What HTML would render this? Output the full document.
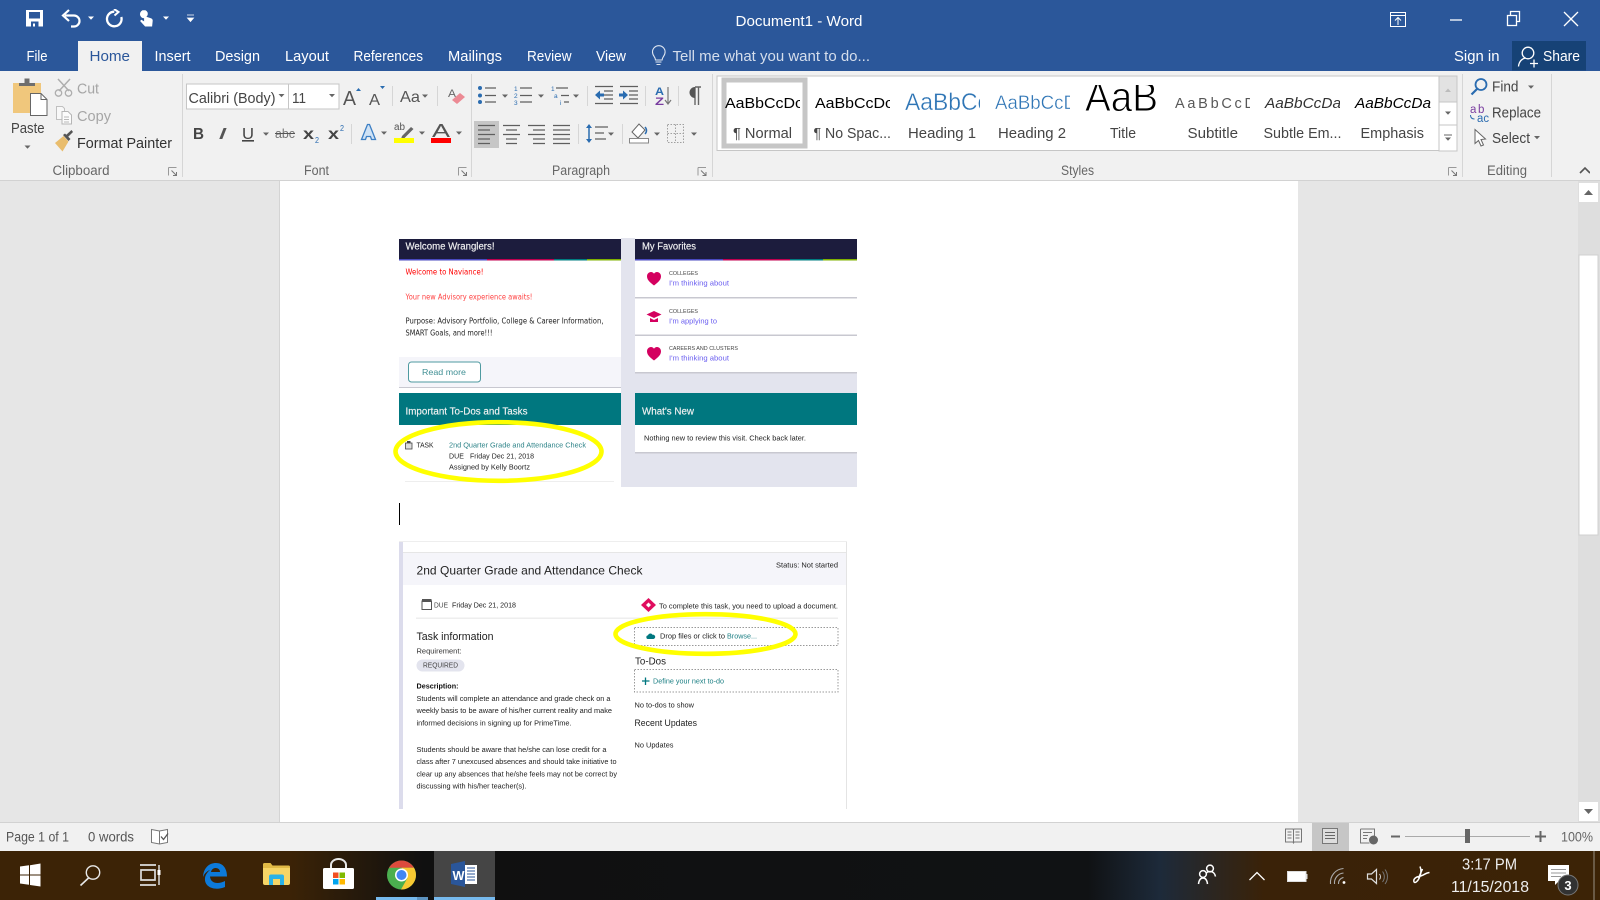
<!DOCTYPE html>
<html><head><meta charset="utf-8"><title>Document1 - Word</title>
<style>
html,body{margin:0;padding:0;width:1600px;height:900px;overflow:hidden;background:#e6e6e6}
svg{display:block;position:absolute;left:0;top:0}
text{font-family:"Liberation Sans",sans-serif;white-space:pre}
.w{fill:#fff;font-size:15px}
.r{fill:#444;font-size:14.5px}
.g{fill:#666;font-size:13.5px}
.d{fill:#222;font-size:7px}
.ln{stroke:#5f5f5f;stroke-width:1.2;fill:none}
.sep{stroke:#d6d6d6;stroke-width:1}
.thin{stroke:#fff;stroke-width:.35}
.hd{font-size:10px;fill:#f2f2f2;stroke:#f2f2f2;stroke-width:.15}
</style></head><body>
<svg width="1600" height="900" viewBox="0 0 1600 900" xmlns="http://www.w3.org/2000/svg">
<defs>
<path id="car" d="M-3-1.5h6l-3 3.2z" fill="#666"/>
<path id="wcar" d="M-3-1.5h6l-3 3.2z" fill="#fff"/>
<g id="lnch"><path d="M0 0h8M0 0v8" stroke="#999" fill="none"/><path d="M3 3l5 5M8 4.5v3.5h-3.5" stroke="#777" fill="none"/></g>
<path id="heart" d="M7 13.5C2 9.5 0 7.5 0 4.2 0 1.8 1.8 0 4 0c1.3 0 2.4.7 3 1.7C7.600.7 8.700 0 10 0c2.200 0 4 1.800 4 4.200 0 3.300-2 5.300-7 9.300z" fill="#d4005f"/>
<filter id="b1" x="0" y="0" width="100%" height="100%"><feGaussianBlur stdDeviation="0.3"/></filter>
<filter id="b2" x="0" y="0" width="100%" height="100%"><feGaussianBlur stdDeviation="0.25"/></filter>
<clipPath id="c1"><rect x="724" y="85" width="76" height="35"/></clipPath>
<clipPath id="c2"><rect x="814" y="85" width="76" height="35"/></clipPath>
<clipPath id="c3"><rect x="904" y="85" width="76" height="35"/></clipPath>
<clipPath id="c4"><rect x="994" y="85" width="76" height="35"/></clipPath>
<clipPath id="c5"><rect x="1084" y="85" width="76" height="35"/></clipPath>
<clipPath id="c6"><rect x="1174" y="85" width="76" height="35"/></clipPath>
<clipPath id="c7"><rect x="1264" y="85" width="76" height="35"/></clipPath>
<clipPath id="c8"><rect x="1354" y="85" width="77" height="35"/></clipPath>
<linearGradient id="tb" x1="0" x2="1" y1="0" y2="0">
<stop offset="0" stop-color="#3c2306"/><stop offset=".18" stop-color="#3c2306"/><stop offset=".265" stop-color="#101010"/><stop offset=".68" stop-color="#101214"/><stop offset=".725" stop-color="#1d2a3a"/><stop offset=".79" stop-color="#3a2208"/><stop offset="1" stop-color="#3c2306"/>
</linearGradient>
</defs>

<!-- backgrounds -->
<rect x="0" y="0" width="1600" height="71" fill="#2b579a"/>
<rect x="0" y="71" width="1600" height="109" fill="#f1f1f1"/>
<rect x="0" y="180" width="1600" height="1" fill="#d2d2d2"/>
<rect x="0" y="181" width="1600" height="641" fill="#e6e6e6"/>
<rect x="280" y="181" width="1018" height="641" fill="#fff"/>
<rect x="279" y="181" width="1" height="641" fill="#d4d4d4"/>
<rect x="1578" y="181" width="22" height="641" fill="#dedede"/>
<rect x="1579" y="255" width="19" height="280" fill="#fff" stroke="#d0d0d0"/>
<rect x="1579" y="183" width="19" height="19" fill="#fff"/>
<path d="M1584 195h9l-4.500-5z" fill="#666"/>
<rect x="1579" y="802" width="19" height="19" fill="#fff"/>
<path d="M1584 809h9l-4.500 5z" fill="#666"/>
<rect x="0" y="822" width="1600" height="1" fill="#d2d2d2"/>
<rect x="0" y="823" width="1600" height="28" fill="#f1f1f1"/>
<rect x="0" y="851" width="1600" height="49" fill="url(#tb)"/>

<g filter="url(#b2)">
<!-- Quick access toolbar -->
<path fill="#fff" fill-rule="evenodd" d="M26 10h17v16.500H26z M29 12v6.500h11V12z M31 21.500v5h2v-3h2v3h3.500v-5z"/>
<path d="M65 15.500h9a5.500 5.500 0 0 1 0 11h-3" stroke="#fff" stroke-width="2.200" fill="none"/>
<path d="M69 10l-6 5.500 6 5.500" stroke="#fff" stroke-width="2.200" fill="none"/>
<use href="#wcar" x="91" y="18"/>
<path d="M121.300 17a7.300 7.300 0 1 1-7-5.300" stroke="#fff" stroke-width="2.300" fill="none"/>
<path d="M114 9l4.500 3-4 3.500" stroke="#fff" stroke-width="2" fill="none"/>
<path fill="#fff" d="M144 10a3.800 3.800 0 0 1 3.800 3.800c0 1.300-.6 2.400-1.500 3l4.600 1.500c1.200.4 1.900 1.300 1.800 2.500l-.6 5.700h-7l-5-5.500 1.300-1.300 2.700 1.700v-3.100a3.800 3.800 0 0 1 0-8.300z"/>
<use href="#wcar" x="166" y="18"/>
<path d="M187 15h7M187.500 18h6l-3 3.500z" stroke="#fff" fill="#fff" stroke-width=".8"/>

<!-- title -->
<text class="w" x="735.500" y="26" textLength="127" lengthAdjust="spacingAndGlyphs">Document1 - Word</text>
<rect x="1390.500" y="12.500" width="15" height="14" stroke="#fff" fill="none"/><path d="M1390 15.500h16" stroke="#fff"/><path d="M1398 25v-7M1395 20.500l3-3 3 3" stroke="#fff" fill="none"/>
<path d="M1450 20h12" stroke="#fff" stroke-width="1.300"/>
<path d="M1507.500 15.500h9v10h-9zM1510.500 15v-3.500h9v10h-3" stroke="#fff" stroke-width="1.300" fill="none"/>
<path d="M1564 12l14 14M1578 12l-14 14" stroke="#fff" stroke-width="1.300"/>

<!-- tabs -->
<rect x="78" y="41" width="64" height="31" fill="#f1f1f1"/>
<text class="w" x="26.500" y="61" textLength="21" lengthAdjust="spacingAndGlyphs">File</text>
<text class="w" style="fill:#2b579a" x="89.500" y="61" textLength="40.500" lengthAdjust="spacingAndGlyphs">Home</text>
<text class="w" x="154.500" y="61" textLength="36" lengthAdjust="spacingAndGlyphs">Insert</text>
<text class="w" x="215" y="61" textLength="45" lengthAdjust="spacingAndGlyphs">Design</text>
<text class="w" x="285" y="61" textLength="44" lengthAdjust="spacingAndGlyphs">Layout</text>
<text class="w" x="353.500" y="61" textLength="69.500" lengthAdjust="spacingAndGlyphs">References</text>
<text class="w" x="448" y="61" textLength="54" lengthAdjust="spacingAndGlyphs">Mailings</text>
<text class="w" x="527" y="61" textLength="44.500" lengthAdjust="spacingAndGlyphs">Review</text>
<text class="w" x="596" y="61" textLength="30" lengthAdjust="spacingAndGlyphs">View</text>
<path d="M655.500 60c0-3-3-4-3-8a6.300 6.300 0 0 1 12.600 0c0 4-3 5-3 8zM655.500 62h6M656.500 64.500h4" stroke="#dfe7f2" stroke-width="1.100" fill="none"/>
<text class="w" style="fill:#d5deec" x="672.500" y="61" textLength="197.500" lengthAdjust="spacingAndGlyphs">Tell me what you want to do...</text>
<text class="w" x="1454" y="61" textLength="45.500" lengthAdjust="spacingAndGlyphs">Sign in</text>
<rect x="1512" y="41" width="74" height="29.500" fill="#184376"/>
<circle cx="1528" cy="53" r="5.800" stroke="#fff" stroke-width="1.300" fill="none"/>
<path d="M1518.500 66.500c.5-5.500 4-8 7-8.500M1530 63.500h8M1534 59.500v8" stroke="#fff" stroke-width="1.300" fill="none"/>
<text class="w" x="1543" y="61" textLength="37" lengthAdjust="spacingAndGlyphs">Share</text>

<!-- Clipboard -->
<rect x="13" y="83" width="28" height="30" fill="#f0c77c"/>
<path d="M19 86v-3h5.500v-4.500h5V83H35v3z" fill="#6e6e6e"/>
<path d="M30.500 93.500h10.500l6 6v16h-16.500z" fill="#fff" stroke="#666"/>
<path d="M41 93.500v6h6" stroke="#666" fill="none"/>
<text class="r" x="11" y="133" textLength="33.500" lengthAdjust="spacingAndGlyphs">Paste</text>
<use href="#car" x="27.500" y="147"/>
<path d="M58 79l11 12M70 79l-11 12" stroke="#aeaeae" stroke-width="1.500"/><circle cx="58.500" cy="93" r="3.200" stroke="#aeaeae" fill="none" stroke-width="1.300"/><circle cx="68.500" cy="93" r="3.200" stroke="#aeaeae" fill="none" stroke-width="1.300"/>
<text class="r" style="fill:#a6a6a6" x="77" y="93.500" textLength="22" lengthAdjust="spacingAndGlyphs">Cut</text>
<path d="M56.500 106.500h6l2 2v11h-8z" fill="#f8f8f8" stroke="#c0c0c0"/><path d="M62 111.500h6l3.500 3.500v9H62z" fill="#fbfbfb" stroke="#b6b6b6"/><path d="M64 117h5M64 119.500h5M64 122h5" stroke="#b8b8b8"/>
<text class="r" style="fill:#a6a6a6" x="77" y="121" textLength="34" lengthAdjust="spacingAndGlyphs">Copy</text>
<path d="M55 143l8.500-7 5 5.500-6 10z" fill="#e9bd6d"/><path d="M63 135l2-1.500 5.500 5.500-2 2z" fill="#555"/><path d="M66 135l5.500-5 1.500 2-5 5z" fill="#555"/>
<text class="r" style="fill:#333" x="77" y="148" textLength="95" lengthAdjust="spacingAndGlyphs">Format Painter</text>
<text class="g" x="52.500" y="175" textLength="57" lengthAdjust="spacingAndGlyphs">Clipboard</text>
<use href="#lnch" x="168.500" y="167.500"/>
<path class="sep" d="M182.500 74v103"/>

<!-- Font -->
<rect x="186.500" y="84" width="102" height="25" fill="#fff" stroke="#c6c6c6"/>
<rect x="288.500" y="84" width="50.500" height="25" fill="#fff" stroke="#c6c6c6"/>
<text class="r" x="188.500" y="103" textLength="87" lengthAdjust="spacingAndGlyphs">Calibri (Body)</text>
<text class="r" x="292" y="103" textLength="14" lengthAdjust="spacingAndGlyphs">11</text>
<use href="#car" x="281.500" y="95.500"/><use href="#car" x="332" y="95.500"/>
<text x="343" y="105" style="font-size:20px;fill:#555" textLength="13" lengthAdjust="spacingAndGlyphs">A</text>
<path d="M356 91h5l-2.500-3z" fill="#2b6cb0"/>
<text x="369" y="105" style="font-size:16px;fill:#555" textLength="11" lengthAdjust="spacingAndGlyphs">A</text>
<path d="M380 86h5l-2.500 3z" fill="#2b6cb0"/>
<path class="sep" d="M392.500 86v20"/>
<text x="400" y="102" style="font-size:16px;fill:#555" textLength="20" lengthAdjust="spacingAndGlyphs">Aa</text>
<use href="#car" x="425" y="96"/>
<path class="sep" d="M437.500 86v20"/>
<text x="448" y="97" style="font-size:11px;fill:#666" textLength="8" lengthAdjust="spacingAndGlyphs">A</text>
<path d="M452 100l8-7 5 4-8 7z" fill="#ec8a94"/>
<text x="193" y="139" style="font-size:16px;font-weight:bold;fill:#444" textLength="11" lengthAdjust="spacingAndGlyphs">B</text>
<text x="218" y="139" style="font-size:16px;font-style:italic;fill:#555" textLength="9" lengthAdjust="spacingAndGlyphs">I</text>
<text x="242" y="139" style="font-size:16px;fill:#444;text-decoration:underline" textLength="12" lengthAdjust="spacingAndGlyphs">U</text>
<use href="#car" x="266" y="134"/>
<text x="275" y="138" style="font-size:13px;fill:#777" textLength="20" lengthAdjust="spacingAndGlyphs">abc</text>
<path d="M275 133.500h20" stroke="#555"/>
<text x="303" y="139" style="font-size:16px;fill:#444;font-weight:bold" textLength="11" lengthAdjust="spacingAndGlyphs">x</text>
<text x="315" y="143" style="font-size:8px;fill:#2b6cb0" textLength="4" lengthAdjust="spacingAndGlyphs">2</text>
<text x="328" y="139" style="font-size:16px;fill:#444;font-weight:bold" textLength="11" lengthAdjust="spacingAndGlyphs">x</text>
<text x="340" y="131" style="font-size:8px;fill:#2b6cb0" textLength="4" lengthAdjust="spacingAndGlyphs">2</text>
<path class="sep" d="M351.500 124v20"/>
<path d="M361.500 139.500l6-15h2l6 15h-4l-1-3h-4l-1 3z" fill="#cfe2f5" stroke="#3c7fc4" stroke-width="1.300"/>
<use href="#car" x="384" y="133"/>
<text x="394" y="130" style="font-size:10px;fill:#555" textLength="11" lengthAdjust="spacingAndGlyphs">ab</text>
<path d="M402 136l9-9 2.500 2-9 9-3.500 1z" fill="#666"/>
<rect x="394" y="138" width="20" height="5" fill="#ffff00"/>
<use href="#car" x="422" y="133"/>
<text x="432" y="137" style="font-size:18px;fill:#555" textLength="18" lengthAdjust="spacingAndGlyphs">A</text>
<rect x="431" y="138" width="20" height="5" fill="#f00"/>
<use href="#car" x="459" y="133"/>
<text class="g" x="304" y="175" textLength="25" lengthAdjust="spacingAndGlyphs">Font</text>
<use href="#lnch" x="458.500" y="167.500"/>
<path class="sep" d="M471.500 74v103"/>

<!-- Paragraph -->
<g fill="#2b6cb0"><circle cx="480" cy="88" r="2"/><circle cx="480" cy="95.500" r="2"/><circle cx="480" cy="102" r="2"/></g>
<path class="ln" d="M485 88h11M485 95.500h11M485 102h11"/>
<use href="#car" x="505" y="96"/>
<text x="514" y="91" style="font-size:6.500px;fill:#2b6cb0">1</text><text x="514" y="98" style="font-size:6.500px;fill:#2b6cb0">2</text><text x="514" y="105" style="font-size:6.500px;fill:#2b6cb0">3</text>
<path class="ln" d="M520 88h12M520 95.500h12M520 102h12"/>
<use href="#car" x="541" y="96"/>
<text x="551" y="91" style="font-size:6.500px;fill:#2b6cb0">1</text><text x="554" y="98" style="font-size:6.500px;fill:#2b6cb0">a</text><text x="560" y="105" style="font-size:6.500px;fill:#2b6cb0">i</text>
<path class="ln" d="M556 88h12M561 95.500h8M564 102h5"/>
<use href="#car" x="576" y="96"/>
<path class="sep" d="M587.500 86v20"/>
<path class="ln" d="M595 86.500h18M604 91h9M604 95h9M604 99h9M595 103.500h18"/>
<path d="M595 95l5-4.500v3h4v3h-4v3z" fill="#2b6cb0"/>
<path class="ln" d="M620 86.500h18M629 91h9M629 95h9M629 99h9M620 103.500h18"/>
<path d="M628 95l-5-4.500v3h-4v3h4v3z" fill="#2b6cb0"/>
<path class="sep" d="M645.500 86v20"/>
<text x="655" y="95" style="font-size:11px;font-weight:bold;fill:#2b6cb0" textLength="9" lengthAdjust="spacingAndGlyphs">A</text>
<text x="655" y="105" style="font-size:11px;font-weight:bold;fill:#7a3ea0" textLength="9" lengthAdjust="spacingAndGlyphs">Z</text>
<path d="M668 87v16M665 100l3 4 3-4" stroke="#777" fill="none" stroke-width="1.200"/>
<path class="sep" d="M678.500 86v20"/>
<path d="M695 87h6M695 87v18M698.500 87v18" stroke="#666" stroke-width="1.400" fill="none"/>
<path d="M695 87a5.500 5.500 0 0 0 0 11z" fill="#555"/>
<rect x="474" y="121" width="25" height="27" fill="#c6c6c6"/>
<path class="ln" d="M478 125.500h17M478 130h12M478 134.500h17M478 139h12M478 143.500h12"/>
<path class="ln" d="M503 125.500h17M506 130h11M503 134.500h17M506 139h11M506 143.500h11"/>
<path class="ln" d="M528 125.500h17M533 130h12M528 134.500h17M533 139h12M533 143.500h12"/>
<path class="ln" d="M553 125.500h17M553 130h17M553 134.500h17M553 139h17M553 143.500h17"/>
<path class="sep" d="M578.500 124v20"/>
<path d="M589 125v16" stroke="#2b6cb0" stroke-width="1.500"/><path d="M586 128l3-4 3 4zM586 139l3 4 3-4z" fill="#2b6cb0"/>
<path class="ln" d="M595 127h13M595 133h9M595 139h11"/>
<use href="#car" x="611" y="134"/>
<path class="sep" d="M622.500 124v20"/>
<path d="M632 132l7-8 6 6-7 8z" fill="#fff" stroke="#666"/><path d="M645 127c2 2 2 5 0 7" stroke="#2b6cb0" stroke-width="1.500" fill="none"/>
<rect x="629.500" y="138.500" width="19" height="4.500" fill="#fff" stroke="#888"/>
<use href="#car" x="657" y="134"/>
<path d="M667.500 124.500h16v18h-16zM675.500 124.500v18M667.500 133.500h16" stroke="#a0a0a0" stroke-dasharray="1.500 1.500" fill="none"/>
<use href="#car" x="694" y="134"/>
<text class="g" x="552" y="175" textLength="58" lengthAdjust="spacingAndGlyphs">Paragraph</text>
<use href="#lnch" x="698" y="167.500"/>
<path class="sep" d="M712.500 74v103"/>

<!-- Styles gallery -->
<rect x="717" y="76" width="722" height="74.500" fill="#fff" stroke="#c6c6c6"/>
<rect x="1439" y="76" width="18" height="26" fill="#e2e2e2" stroke="#c6c6c6"/>
<rect x="1439" y="102" width="18" height="23" fill="#fff" stroke="#c6c6c6"/>
<rect x="1439" y="125" width="18" height="26" fill="#fff" stroke="#c6c6c6"/>
<path d="M1445 92h6l-3-3.500z" fill="#bcbcbc"/><use href="#car" x="1448" y="113"/>
<path d="M1444 135h8" stroke="#666"/><use href="#car" x="1448" y="139"/>
<rect x="724" y="80" width="81" height="66" fill="#fff" stroke="#c6c6c6" stroke-width="5"/>
<text clip-path="url(#c1)" x="725" y="108" style="font-size:14.500px;fill:#000" textLength="78" lengthAdjust="spacingAndGlyphs">AaBbCcDc</text>
<text clip-path="url(#c2)" x="815" y="108" style="font-size:14.500px;fill:#000" textLength="78" lengthAdjust="spacingAndGlyphs">AaBbCcDc</text>
<text class="thin" clip-path="url(#c3)" x="905" y="110" style="font-size:24px;fill:#2e74b5" textLength="84" lengthAdjust="spacingAndGlyphs">AaBbCc</text>
<text class="thin" clip-path="url(#c4)" x="995" y="109" style="font-size:19.500px;fill:#2e74b5" textLength="82" lengthAdjust="spacingAndGlyphs">AaBbCcD</text>
<text clip-path="url(#c5)" x="1085" y="111" style="font-size:42px;fill:#000;stroke:#fff;stroke-width:.9" textLength="73" lengthAdjust="spacingAndGlyphs">AaB</text>
<text clip-path="url(#c6)" x="1175" y="108" style="font-size:14.500px;fill:#595959" textLength="80" lengthAdjust="spacing">AaBbCcD</text>
<text clip-path="url(#c7)" x="1265" y="108" style="font-size:14.500px;fill:#333;font-style:italic" textLength="76" lengthAdjust="spacingAndGlyphs">AaBbCcDa</text>
<text clip-path="url(#c8)" x="1355" y="108" style="font-size:14.500px;fill:#000;font-style:italic" textLength="76" lengthAdjust="spacingAndGlyphs">AaBbCcDa</text>
<text class="r" x="733" y="138" textLength="59" lengthAdjust="spacingAndGlyphs">¶ Normal</text>
<text class="r" x="813.500" y="138" textLength="77.500" lengthAdjust="spacingAndGlyphs">¶ No Spac...</text>
<text class="r" x="908" y="138" textLength="68" lengthAdjust="spacingAndGlyphs">Heading 1</text>
<text class="r" x="998" y="138" textLength="68" lengthAdjust="spacingAndGlyphs">Heading 2</text>
<text class="r" x="1110" y="138" textLength="26" lengthAdjust="spacingAndGlyphs">Title</text>
<text class="r" x="1187.500" y="138" textLength="50.500" lengthAdjust="spacingAndGlyphs">Subtitle</text>
<text class="r" x="1263.500" y="138" textLength="78" lengthAdjust="spacingAndGlyphs">Subtle Em...</text>
<text class="r" x="1360.500" y="138" textLength="63.500" lengthAdjust="spacingAndGlyphs">Emphasis</text>
<text class="g" x="1061" y="175" textLength="33" lengthAdjust="spacingAndGlyphs">Styles</text>
<use href="#lnch" x="1448.500" y="167.500"/>
<path class="sep" d="M1462.500 74v103"/>

<!-- Editing -->
<circle cx="1481" cy="84.500" r="5.500" stroke="#2b6cb0" stroke-width="1.800" fill="none"/><path d="M1477 89l-5.500 5.500" stroke="#2b6cb0" stroke-width="2.200"/>
<text class="r" x="1492" y="91.500" textLength="26.500" lengthAdjust="spacingAndGlyphs">Find</text>
<use href="#car" x="1531" y="87"/>
<text x="1470" y="113" style="font-size:11.500px;fill:#7a3ea0">a</text><text x="1478" y="113" style="font-size:11.500px;fill:#7a3ea0">b</text>
<text x="1477" y="122" style="font-size:11.500px;fill:#2b6cb0" textLength="12" lengthAdjust="spacingAndGlyphs">ac</text>
<path d="M1470.500 115c0 3 2 4 4 4" stroke="#2b6cb0" fill="none"/>
<text class="r" x="1492" y="117.500" textLength="49" lengthAdjust="spacingAndGlyphs">Replace</text>
<path d="M1475 129.500v14l3.500-3 2.500 5.500 2.500-1-2.500-5.500 4.500-.5z" fill="#fff" stroke="#666"/>
<text class="r" x="1492" y="143" textLength="38" lengthAdjust="spacingAndGlyphs">Select</text>
<use href="#car" x="1537" y="137.500"/>
<text class="g" x="1487" y="175" textLength="40" lengthAdjust="spacingAndGlyphs">Editing</text>
<path class="sep" d="M1551.500 74v103"/>
<path d="M1580 173l5-5 5 5" stroke="#555" stroke-width="1.600" fill="none"/>
</g>

<!-- Embedded screenshot 1 -->
<g filter="url(#b1)">
<rect x="621" y="238" width="14" height="249" fill="#e3e4ee"/>
<rect x="635" y="372" width="222" height="115" fill="#e3e4ee"/>
<rect x="399" y="388" width="222" height="5" fill="#fff"/>
<rect x="399" y="239" width="222" height="20" fill="#1b1c3e"/>
<rect x="635" y="239" width="222" height="20" fill="#1b1c3e"/>
<g>
<rect x="399" y="259" width="88" height="1.500" fill="#4a4abf"/><rect x="487" y="259" width="67" height="1.500" fill="#c0064f"/><rect x="554" y="259" width="33" height="1.500" fill="#007c80"/><rect x="587" y="259" width="34" height="1.500" fill="#7fb000"/>
<rect x="635" y="259" width="88" height="1.500" fill="#4a4abf"/><rect x="723" y="259" width="67" height="1.500" fill="#c0064f"/><rect x="790" y="259" width="33" height="1.500" fill="#007c80"/><rect x="823" y="259" width="34" height="1.500" fill="#7fb000"/>
</g>
<rect x="399" y="357" width="222" height="30" fill="#f5f5fa"/>
<rect x="399" y="387" width="222" height="1" fill="#c8c8d0"/>
<rect x="408.500" y="362" width="72" height="20" rx="3" fill="#fff" stroke="#4f9aa0"/>
<text x="422" y="375" style="font-size:8.500px;fill:#3f8f94" textLength="44" lengthAdjust="spacingAndGlyphs">Read more</text>
<text class="hd" x="405.500" y="249.500" textLength="89" lengthAdjust="spacingAndGlyphs">Welcome Wranglers!</text>
<text class="hd" x="642" y="249.500" textLength="54" lengthAdjust="spacingAndGlyphs">My Favorites</text>
<text x="405.500" y="274.500" style="font-size:7.500px;fill:#f00;font-family:'DejaVu Sans',sans-serif" textLength="78" lengthAdjust="spacingAndGlyphs">Welcome to Naviance!</text>
<text x="405.500" y="299.500" style="font-size:7.500px;fill:#f44;font-family:'DejaVu Sans',sans-serif" textLength="127" lengthAdjust="spacingAndGlyphs">Your new Advisory experience awaits!</text>
<text x="405.500" y="323.500" style="font-size:7.500px;fill:#222;font-family:'DejaVu Sans',sans-serif" textLength="198" lengthAdjust="spacingAndGlyphs">Purpose: Advisory Portfolio, College &amp; Career Information,</text>
<text x="405.500" y="335.500" style="font-size:7.500px;fill:#222;font-family:'DejaVu Sans',sans-serif" textLength="87" lengthAdjust="spacingAndGlyphs">SMART Goals, and more!!!</text>
<rect x="635" y="297" width="222" height="1.500" fill="#c8c8d0"/><rect x="635" y="334.500" width="222" height="1.500" fill="#c8c8d0"/><rect x="635" y="372" width="222" height="1.500" fill="#c8c8d0"/>
<use href="#heart" x="647" y="272"/>
<path d="M646.500 314.500l7.500-3.500 7.500 3.500-7.500 3.500zM650 318v4h8v-4l-4 2z" fill="#d4005f"/>
<use href="#heart" x="647" y="347"/>
<text x="669" y="275" style="font-size:5.500px;fill:#444" textLength="29" lengthAdjust="spacingAndGlyphs">COLLEGES</text>
<text x="669" y="285.500" style="font-size:7.500px;fill:#6b5ff0" textLength="60" lengthAdjust="spacingAndGlyphs">I'm thinking about</text>
<text x="669" y="313" style="font-size:5.500px;fill:#444" textLength="29" lengthAdjust="spacingAndGlyphs">COLLEGES</text>
<text x="669" y="323.500" style="font-size:7.500px;fill:#6b5ff0" textLength="48" lengthAdjust="spacingAndGlyphs">I'm applying to</text>
<text x="669" y="350" style="font-size:5.500px;fill:#444" textLength="69" lengthAdjust="spacingAndGlyphs">CAREERS AND CLUSTERS</text>
<text x="669" y="360.500" style="font-size:7.500px;fill:#6b5ff0" textLength="60" lengthAdjust="spacingAndGlyphs">I'm thinking about</text>
<rect x="399" y="393" width="222" height="32" fill="#00777f"/>
<rect x="635" y="393" width="222" height="32" fill="#00777f"/>
<rect x="635" y="425" width="222" height="27" fill="#fff"/>
<rect x="635" y="452" width="222" height="1.500" fill="#c8c8d0"/>
<text class="hd" x="405.500" y="414.500" textLength="122" lengthAdjust="spacingAndGlyphs">Important To-Dos and Tasks</text>
<text class="hd" x="642" y="414.500" textLength="52" lengthAdjust="spacingAndGlyphs">What's New</text>
<text x="644" y="440.500" style="font-size:7px;fill:#222" textLength="162" lengthAdjust="spacingAndGlyphs">Nothing new to review this visit. Check back later.</text>
<rect x="405.500" y="443" width="6.500" height="6" fill="#ddd" stroke="#444" stroke-width=".8"/><rect x="407" y="441" width="3.500" height="2" fill="#444"/>
<text x="416.500" y="447.500" style="font-size:7px;fill:#222" textLength="17" lengthAdjust="spacingAndGlyphs">TASK</text>
<text x="449" y="447.500" style="font-size:7px;fill:#2f8489" textLength="137" lengthAdjust="spacingAndGlyphs">2nd Quarter Grade and Attendance Check</text>
<text x="449" y="458.500" style="font-size:7px;fill:#222" textLength="85" lengthAdjust="spacing">DUE   Friday Dec 21, 2018</text>
<text x="449" y="469.500" style="font-size:7px;fill:#222" textLength="81" lengthAdjust="spacingAndGlyphs">Assigned by Kelly Boortz</text>
<rect x="405" y="481" width="209" height="1" fill="#eee"/>
</g>
<ellipse cx="498.500" cy="451.500" rx="103" ry="29.300" fill="none" stroke="#ffff00" stroke-width="4.600"/>

<rect x="399" y="503" width="1" height="22" fill="#000"/>

<!-- Embedded screenshot 2 -->
<g filter="url(#b1)">
<rect x="399" y="541" width="448" height="1" fill="#eee"/>
<rect x="399" y="542" width="4" height="267" fill="#dcdcec"/>
<rect x="846" y="542" width="1" height="267" fill="#e4e4e4"/>
<rect x="403" y="553" width="443" height="32" fill="#f5f5fa"/>
<rect x="403" y="552" width="443" height="1" fill="#e6e6e6"/>
<text x="416.500" y="574.500" style="font-size:12px;fill:#222" textLength="226" lengthAdjust="spacing">2nd Quarter Grade and Attendance Check</text>
<text x="776" y="567.500" style="font-size:7px;fill:#222" textLength="62" lengthAdjust="spacingAndGlyphs">Status: Not started</text>
<rect x="422" y="601" width="9.500" height="8.500" fill="#fff" stroke="#555"/><rect x="422" y="599" width="9.500" height="3" fill="#555"/>
<text x="434" y="607.500" style="font-size:7px;fill:#444" textLength="14" lengthAdjust="spacingAndGlyphs">DUE</text>
<text x="452" y="607.500" style="font-size:7px;fill:#222" textLength="64" lengthAdjust="spacingAndGlyphs">Friday Dec 21, 2018</text>
<path d="M648.500 598l7.500 7-7.500 7-7.500-7z" fill="#e0115f"/><path d="M648.500 602.500l2.500 2.500-2.500 2.500-2.500-2.500z" fill="#fff"/>
<text x="659" y="608.500" style="font-size:7px;fill:#222" textLength="179" lengthAdjust="spacingAndGlyphs">To complete this task, you need to upload a document.</text>
<rect x="416" y="617.500" width="422" height="1.500" fill="#eee"/>
<text x="416.500" y="640" style="font-size:11px;fill:#222" textLength="77" lengthAdjust="spacingAndGlyphs">Task information</text>
<text x="416.500" y="653.500" style="font-size:7px;fill:#333" textLength="45" lengthAdjust="spacingAndGlyphs">Requirement:</text>
<rect x="416.500" y="659.500" width="48" height="12" rx="6" fill="#e3e4ee"/>
<text x="423" y="667.500" style="font-size:7px;fill:#444" textLength="35" lengthAdjust="spacingAndGlyphs">REQUIRED</text>
<text x="416.500" y="688.500" style="font-size:7px;font-weight:bold;fill:#111" textLength="42" lengthAdjust="spacingAndGlyphs">Description:</text>
<text class="d" x="416.500" y="701" textLength="194" lengthAdjust="spacingAndGlyphs">Students will complete an attendance and grade check on a</text>
<text class="d" x="416.500" y="713" textLength="195.500" lengthAdjust="spacingAndGlyphs">weekly basis to be aware of his/her current reality and make</text>
<text class="d" x="416.500" y="725.500" textLength="155" lengthAdjust="spacingAndGlyphs">informed decisions in signing up for PrimeTime.</text>
<text class="d" x="416.500" y="752" textLength="190" lengthAdjust="spacingAndGlyphs">Students should be aware that he/she can lose credit for a</text>
<text class="d" x="416.500" y="764" textLength="200" lengthAdjust="spacingAndGlyphs">class after 7 unexcused absences and should take initiative to</text>
<text class="d" x="416.500" y="776.500" textLength="200.500" lengthAdjust="spacingAndGlyphs">clear up any absences that he/she feels may not be correct by</text>
<text class="d" x="416.500" y="788.500" textLength="110" lengthAdjust="spacingAndGlyphs">discussing with his/her teacher(s).</text>
<rect x="634.500" y="627.500" width="203.500" height="18" fill="#fff" stroke="#999" stroke-dasharray="1.500 1.500"/>
<path d="M647.500 639a2 2 0 0 1 .5-3.800 2.500 2.500 0 0 1 4.500-.5 2 2 0 0 1 1 4.300z" fill="#00777f"/>
<text class="d" x="660" y="638.500" textLength="65" lengthAdjust="spacingAndGlyphs">Drop files or click to</text>
<text class="d" style="fill:#1f8085" x="727" y="638.500" textLength="30" lengthAdjust="spacingAndGlyphs">Browse...</text>
<text x="635" y="664.500" style="font-size:10px;fill:#222" textLength="31" lengthAdjust="spacingAndGlyphs">To-Dos</text>
<rect x="634.500" y="669.500" width="203.500" height="22.500" fill="#fff" stroke="#999" stroke-dasharray="1.500 1.500"/>
<path d="M645.500 677.500v7.500M642 681h7.500" stroke="#00777f" stroke-width="1.300"/>
<text class="d" style="fill:#1f8085" x="653" y="683.500" textLength="71" lengthAdjust="spacingAndGlyphs">Define your next to-do</text>
<text class="d" x="634.500" y="707.500" textLength="59.500" lengthAdjust="spacingAndGlyphs">No to-dos to show</text>
<text x="634.500" y="726" style="font-size:9px;fill:#222" textLength="62.500" lengthAdjust="spacingAndGlyphs">Recent Updates</text>
<text class="d" x="634.500" y="747.500" textLength="39" lengthAdjust="spacingAndGlyphs">No Updates</text>
</g>
<ellipse cx="705.500" cy="634" rx="90" ry="19.800" fill="none" stroke="#ffff00" stroke-width="4.600"/>

<!-- Status bar -->
<g filter="url(#b2)">
<text x="6" y="841.500" style="font-size:13.500px;fill:#555" textLength="63" lengthAdjust="spacingAndGlyphs">Page 1 of 1</text>
<text x="88" y="841.500" style="font-size:13.500px;fill:#555" textLength="46" lengthAdjust="spacingAndGlyphs">0 words</text>
<path d="M151.500 829.500l8 1.500 8-1.500v13l-8 1.500-8-1.500zM159.500 831v13" stroke="#777" fill="#fff"/>
<path d="M161 836.500l2.500 3 4.500-6" stroke="#555" stroke-width="1.300" fill="none"/>
<path d="M1285.500 829h7.500l.5 1 .5-1h7.500v13h-7.500l-.5 1-.5-1h-7.500zM1293.500 830v12M1287.500 832h4M1287.500 835h4M1287.500 838h4M1295.500 832h4M1295.500 835h4M1295.500 838h4" stroke="#777" fill="none"/>
<rect x="1312" y="823" width="37" height="28" fill="#c6c6c6"/>
<rect x="1322.500" y="828.500" width="15" height="15" fill="#ddd" stroke="#777"/>
<path d="M1325 832.500h10M1325 835.500h10M1325 838.500h10" stroke="#666"/>
<path d="M1360.500 829h14v8M1360.500 829v14h9M1363 832.500h9M1363 835.500h5M1363 838.500h4" stroke="#777" fill="none"/>
<circle cx="1373.500" cy="840" r="4.500" fill="#666"/>
<rect x="1391" y="835.500" width="9" height="2" fill="#666"/>
<rect x="1405" y="836" width="125" height="1" fill="#aaa"/>
<rect x="1465" y="829" width="5" height="14" fill="#666"/>
<path d="M1535 836.500h11M1540.500 831v11" stroke="#666" stroke-width="2"/>
<text x="1561" y="841.500" style="font-size:13.500px;fill:#666" textLength="32" lengthAdjust="spacingAndGlyphs">100%</text>

<!-- Taskbar -->
<rect x="434" y="851" width="61" height="46" fill="#444"/>
<rect x="376" y="897" width="52" height="3" fill="#76b9ed"/><rect x="417" y="897" width="11" height="3" fill="#5b93c0"/>
<rect x="434" y="897" width="61" height="3" fill="#76b9ed"/>
<path d="M20 866.500l9-1.200v9.200h-9zM30 865.200l10.500-1.700v11h-10.500zM20 875.500h9v9.300l-9-1.300zM30 875.500h10.500v11L30 885z" fill="#fff"/>
<circle cx="93" cy="872.500" r="6.700" stroke="#e8e8e8" stroke-width="1.400" fill="none"/><path d="M88.500 878l-8 7.500" stroke="#e8e8e8" stroke-width="1.600"/>
<path d="M140 865h16M140 885h16M141 870h14v10h-14z" stroke="#ddd" stroke-width="1.700" fill="none"/>
<path d="M159 865v20" stroke="#ddd" stroke-width="1.500"/><rect x="157.500" y="870" width="3" height="5" fill="#fff"/>
<path d="M203 877c.5-9 6-14 13-14 7 0 11 5.500 11 13.500h-17c.5 7 8 8 15 4.500v6c-9 4-21 1-20-9 .3-3 2.500-6 5-8-2 .5-5.500 3-7 7zm8-5h9c0-5-8-5.500-9 0z" fill="#0c7ad9"/>
<rect x="263" y="866" width="27" height="19" rx="2" fill="#f6d566"/>
<path d="M263 868v-3.500a1.500 1.500 0 0 1 1.500-1.500h6l2 2.500h16a1.500 1.500 0 0 1 1.500 1.500v1z" fill="#e2ba45"/>
<path d="M269 885v-8.500a2 2 0 0 1 2-2h11a2 2 0 0 1 2 2v8.500h-4v-6h-7v6z" fill="#2cb2e8"/>
<rect x="323" y="868" width="31" height="21" rx="1.500" fill="#fff"/>
<path d="M331 868v-3a7.500 6 0 0 1 15 0v3" stroke="#e8e8e8" stroke-width="2" fill="none"/>
<rect x="333" y="872.500" width="5.500" height="5.500" fill="#f25022"/><rect x="339.500" y="872.500" width="5.500" height="5.500" fill="#7fba00"/><rect x="333" y="879" width="5.500" height="5.500" fill="#00a4ef"/><rect x="339.500" y="879" width="5.500" height="5.500" fill="#ffb900"/>
<circle cx="401.500" cy="875" r="14.500" fill="#4caf50"/>
<path d="M389 867.700a14.500 14.500 0 0 1 25 0h-12.500z" fill="#dd4b3e"/>
<path d="M414 867.700a14.500 14.500 0 0 1-13 21.800l6.500-11.500-6-10.300z" fill="#f8c933"/>
<circle cx="401.500" cy="875" r="6.500" fill="#fff"/><circle cx="401.500" cy="875" r="5" fill="#4285f4"/>
<path d="M451 864l14-3v26l-14-3z" fill="#2b579a"/>
<rect x="465" y="865" width="12" height="19" fill="#fff"/><path d="M467 868h8M467 871h8M467 874h8M467 877h8M467 880h8" stroke="#2b579a"/>
<text x="452.500" y="880" style="font-size:13px;font-weight:bold;fill:#fff" textLength="12" lengthAdjust="spacingAndGlyphs">W</text>

<!-- Tray -->
<circle cx="1210" cy="868.500" r="3.400" stroke="#fff" stroke-width="1.500" fill="none"/><circle cx="1203" cy="874" r="3.400" stroke="#fff" stroke-width="1.500" fill="none"/>
<path d="M1198.500 884c.5-4 2-6 4.500-6s4 2 4.500 6M1206 873.500c1-1.500 2.500-2 4-2 3 0 5 2 5.500 5" stroke="#fff" stroke-width="1.500" fill="none"/>
<path d="M1249.500 880l7.500-7.500 7.500 7.500" stroke="#fff" stroke-width="1.300" fill="none"/>
<rect x="1287.500" y="871.500" width="18.500" height="10" fill="#fff" stroke="#ddd"/><rect x="1306" y="874" width="1.500" height="5" fill="#ddd"/>
<path d="M1330.500 884a14 14 0 0 1 13-15.500M1334.500 884a10 10 0 0 1 9-11M1338.500 884a6 6 0 0 1 5-6.500" stroke="#aaa" stroke-width="1.100" fill="none"/>
<circle cx="1344" cy="882.500" r="1.400" fill="#fff"/>
<path d="M1367.500 874h4l5-4.500v14l-5-4.500h-4z" stroke="#ddd" fill="none" stroke-width="1.200"/>
<path d="M1379.500 874a4.500 4.500 0 0 1 0 5.500" stroke="#ddd" fill="none"/>
<path d="M1382.500 871.500a8.500 8.500 0 0 1 0 10.500M1385 869.500a12 12 0 0 1 0 14.500" stroke="#777" fill="none"/>
<path d="M1414 882c-1-3 2-5 4.500-5.500M1420 866.500c1.500 3.500 1 8-1 12-1.500 3-4 5-5 3.500M1420 876c3 0 5-3 9.500-3.500M1422.500 869l-4 9" stroke="#fff" stroke-width="1.500" fill="none"/>
<text x="1462" y="869.500" style="font-size:15.500px;fill:#eee" textLength="55" lengthAdjust="spacingAndGlyphs">3:17 PM</text>
<text x="1451" y="892" style="font-size:15.500px;fill:#eee" textLength="78" lengthAdjust="spacingAndGlyphs">11/15/2018</text>
<path d="M1548 865h21v16h-10l-4 4v-4h-7z" fill="#fff"/>
<path d="M1551 869.500h15M1551 873h15M1551 876.500h10" stroke="#999"/>
<circle cx="1568" cy="885" r="10" fill="#333" stroke="#777" stroke-width="1"/>
<text x="1568" y="890" style="font-size:13px;font-weight:bold;fill:#fff" text-anchor="middle">3</text>
<rect x="1593" y="851" width="2" height="49" fill="#6b5a44"/>
</g>
</svg>
</body></html>
